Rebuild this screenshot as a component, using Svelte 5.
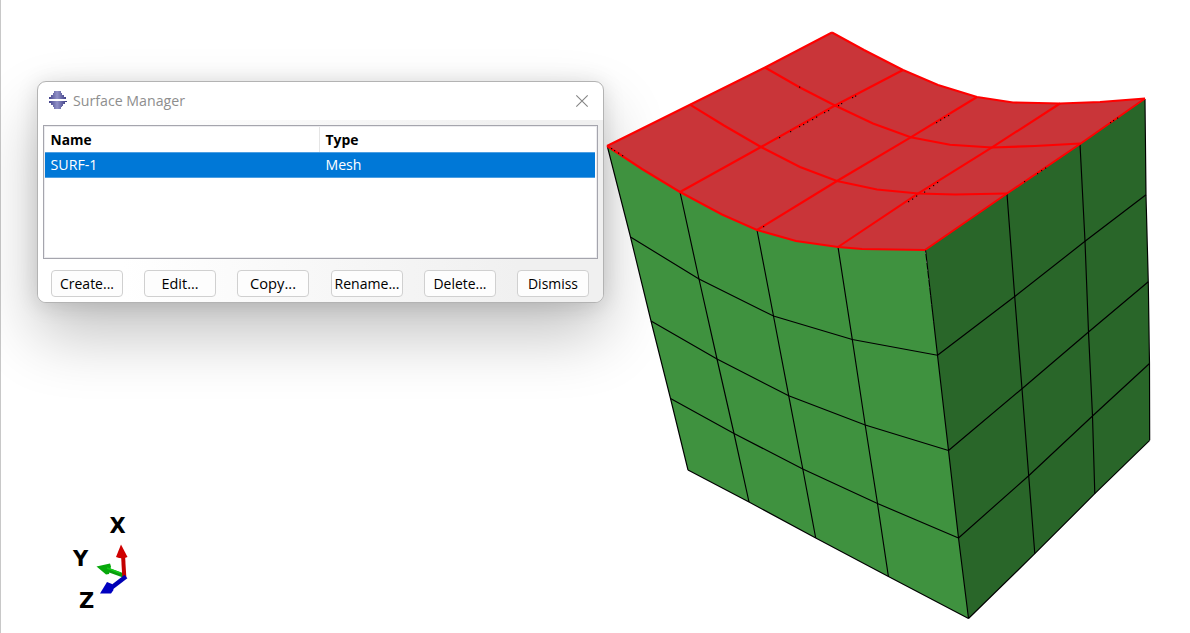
<script>
  const buttons = ['Create...', 'Edit...', 'Copy...', 'Rename...', 'Delete...', 'Dismiss'];
  const labelWidths = [54, 37, 46, 65, 53, 50];

  // Columns of nodes, top to bottom, for each visible side of the mesh
  const front = [
    [[607.5, 147], [630.5, 237], [651, 321], [670.5, 398.5], [688, 470]],
    [[680, 192], [699, 279], [717, 359], [734, 433.5], [749, 502]],
    [[757, 230], [773.5, 316], [788.7, 395.7], [802.8, 469], [815.7, 538]],
    [[838, 247], [852.3, 339.5], [865.2, 425], [877.5, 503.5], [888.4, 576.5]],
    [[925.5, 250], [937.5, 355.2], [948.5, 450.5], [958.5, 538], [968.5, 618.5]]
  ];
  const side = [
    front[4],
    [[1007, 194], [1014.7, 296.5], [1022, 388.7], [1028.7, 475.7], [1034.8, 553.7]],
    [[1080, 144.3], [1085, 241.3], [1088.5, 332], [1092.5, 416], [1094.8, 493.7]],
    [[1145, 99], [1146, 194.7], [1148.3, 281.8], [1149.5, 363.5], [1149.7, 440.3]]
  ];
  // Quadratic element edges on the surface, including midside nodes
  const surfaceRows = [
    [[832, 32.5], [864, 50], [903, 70], [938, 85], [977, 97], [1013, 102.5], [1060, 103.5], [1100, 102], [1145, 98.5]],
    [[765, 67.5], [799, 87], [835, 105.5], [873, 123.5], [910.7, 137.3], [950, 144.8], [992, 147.5], [1035, 146], [1080, 143.5]],
    [[690, 104.7], [724, 125.5], [761, 147], [800, 167], [837, 181], [877, 189.5], [918.3, 193.5], [955, 194.5], [1007, 193.5]],
    [[607, 146], [642, 169], [680, 192], [722, 214.5], [757, 230], [796, 241], [838, 247], [862, 249], [925, 250]]
  ];
  const surfaceCols = [
    [[607, 146], [690, 104.7], [765, 67.5], [832, 32.5]],
    [[680, 192], [761, 147], [835, 105.5], [903, 70]],
    [[757, 230], [837, 181], [910.7, 137.3], [977, 97]],
    [[838, 247], [918.3, 193.4], [992, 147.4], [1060, 103.5]],
    [[925, 250], [1007, 193.5], [1080, 144], [1145, 98.5]]
  ];
  const specks = [[799, 86.5], [779, 137], [790, 131], [799, 126], [803, 124], [807, 121.5], [812, 119], [816, 116.5], [824, 112], [828, 110], [838, 105], [841, 103], [852, 97], [855, 95.5], [611, 148], [614, 150], [618, 152.5], [622, 155], [763, 226], [936, 122], [940, 119.5], [944, 117], [948, 115], [908, 201], [912, 198.5], [916, 195.5], [924, 191.5], [929, 188], [933, 185], [937, 182], [1024, 181], [1037, 173], [1041, 170], [1045, 167.5], [1110, 122], [1113, 120], [1117, 117.5]];

  const pts = (a) => a.map((p) => p.join(',')).join(' ');
  const row = (cols, i) => cols.map((c) => c[i]);
  const face = (cols) => [...row(cols, 0), ...cols[cols.length - 1], ...row(cols, 4).reverse(), ...[...cols[0]].reverse()];
  const surface = [...surfaceRows[0], ...[...surfaceCols[4]].reverse(), ...[...surfaceRows[3]].reverse(), ...surfaceCols[0]];
</script>

<main class="viewport">
  <svg class="scene" viewBox="0 0 1190 633" width="1190" height="633">
    <g shape-rendering="crispEdges">
      <polygon points={pts([...surfaceRows[3], ...front[4].slice(1), ...row(front, 4).reverse(), ...[...front[0]].reverse()])} fill="#3f923f" />
      <polygon points={pts(face(side))} fill="#296629" />
      <polygon points={pts(surface)} fill="#c93539" />
    </g>
    <g fill="none" stroke="#000" stroke-width="1.15">
      {#each [...front, ...side.slice(1)] as c}<polyline points={pts(c)} />{/each}
      {#each [1, 2, 3, 4] as i}
        <polyline points={pts(row(front, i))} />
        <polyline points={pts(row(side, i))} />
      {/each}
    </g>
    <g fill="none" stroke="#f00" stroke-width="2.1">
      {#each [...surfaceRows, ...surfaceCols] as c}<polyline points={pts(c)} />{/each}
    </g>
    <g fill="#180000">
      {#each specks as [x, y]}<rect {x} {y} width="1.2" height="1.2" />{/each}
    </g>

    <g class="triad">
      <path d="M125 576L107 569.5" stroke="#0a9c0e" stroke-width="4" />
      <path d="M96.5 566.5L110 563.5L111 566.5L109 574L106 574.5Z" fill="#07a80b" />
      <path d="M107 568L120 573" stroke="#12c818" stroke-width="1.4" />
      <path d="M124.3 577L123 555" stroke="#c40000" stroke-width="4" />
      <path d="M121 544.5L127.5 557Q122 559.500 116 557Z" fill="#cf0000" />
      <path d="M126 576.500L111 588" stroke="#0000b4" stroke-width="4.500" />
      <path d="M100 593.500L107 582L112 584L113.500 590L111 593.500Z" fill="#0000c0" />
      <text x="109.500" y="533">X</text>
      <text x="73" y="566">Y</text>
      <text x="79" y="608">Z</text>
    </g>
  </svg>

  <section class="dialog">
    <header>
      <svg class="logo" width="18" height="18" viewBox="0 0 18 18" shape-rendering="crispEdges">
        <defs>
          <linearGradient id="metal"><stop offset="0" stop-color="#43438b" /><stop offset=".45" stop-color="#9191c7" /><stop offset="1" stop-color="#37377f" /></linearGradient>
        </defs>
        <path d="M5 0H12V2H13V4H15V6H17V8H0V6H2V4H4V2H5ZM0 10H18V11H16V13H14V15H13V16H12V18H5V16H4V14H2V12H0Z" fill="url(#metal)" />
      </svg>
      <svg class="title" width="124" height="24"><text x="0" y="17" textLength="112" lengthAdjust="spacingAndGlyphs">Surface Manager</text></svg>
      <svg class="close" width="12" height="12" viewBox="0 0 12 12"><path d="M.3.3L11.700 11.700M11.700.3L.3 11.700" stroke="#858585" stroke-width="1.1" /></svg>
    </header>
    <div class="body">
      <div class="table">
        <div class="row head">
          <svg class="cell" width="60" height="24"><text x="-.5" y="18" textLength="41" lengthAdjust="spacingAndGlyphs">Name</text></svg>
          <svg class="cell" width="60" height="24"><text x="-.5" y="18" textLength="33" lengthAdjust="spacingAndGlyphs">Type</text></svg>
        </div>
        <div class="row selected">
          <svg class="cell" width="60" height="24"><text x="-.5" y="17" textLength="47" lengthAdjust="spacingAndGlyphs">SURF-1</text></svg>
          <svg class="cell" width="60" height="24"><text x="-.5" y="17" textLength="36" lengthAdjust="spacingAndGlyphs">Mesh</text></svg>
        </div>
      </div>
      <div class="actions">
        {#each buttons as label, i}
          <button><svg width="70" height="25"><text x={35 - labelWidths[i] / 2} y="18" textLength={labelWidths[i]} lengthAdjust="spacingAndGlyphs">{label}</text></svg></button>
        {/each}
      </div>
    </div>
  </section>
</main>

<style>
  :global(body) { margin: 0; background: #fff; }
  .viewport {
    position: relative;
    box-sizing: border-box;
    width: 1190px;
    height: 633px;
    overflow: hidden;
    background: #fff;
    font-family: "Open Sans", "Noto Sans", sans-serif;
  }
  .viewport::before {
    content: "";
    position: absolute;
    inset: 0 auto 0 0;
    width: 1px;
    background: #c8c8c8;
  }
  .scene { position: absolute; inset: 0; z-index: 1; }
  .triad text { font: bold 21px "DejaVu Sans", sans-serif; }
  .dialog {
    position: absolute;
    left: 37px;
    top: 81px;
    box-sizing: border-box;
    width: 567px;
    height: 222px;
    border: 1px solid #b3b3b3;
    border-radius: 9px;
    display: flex;
    flex-direction: column;
    overflow: hidden;
    background: #fff;
    box-shadow: 0 32px 64px rgba(0, 0, 0, .24), 0 2px 21px rgba(0, 0, 0, .13);
  }
  header {
    height: 38px;
    flex: none;
    display: flex;
    align-items: center;
    padding: 0 15px 0 11px;
  }
  .logo { margin-top: -2px; }
  .title { margin-left: 6px; font-size: 15px; }
  .title text { fill: #8e8e8e; }
  .close { margin-left: auto; overflow: visible; }
  .cell, button svg { overflow: visible; }
  .body {
    flex: 1;
    display: flex;
    flex-direction: column;
    padding: 5px 5px 0;
    background: linear-gradient(90deg, #fff 0, #fff 15%, #f0f0f0 85%);
  }
  .table {
    box-sizing: border-box;
    height: 134px;
    border: 1px solid #a5a5ad;
    background: #fff;
    padding: 1px;
    box-shadow: inset 0 0 0 1px #ececef;
  }
  .row {
    box-sizing: border-box;
    display: grid;
    grid-template-columns: 275px 1fr;
    height: 25px;
    padding-left: 6px;
    font-size: 15px;
  }
  .head { font-weight: 700; background: linear-gradient(#e5e5e5, #e5e5e5) 274px 0 / 1px 100% no-repeat; }
  .selected {
    height: 26px;
    margin-right: 1px;
    border: solid #4d9fe2;
    border-width: 1px 0;
    background: #0078d7;
  }
  .selected text { fill: #fff; }
  .actions { display: flex; justify-content: space-between; padding: 11px 9px 0 8px; }
  button {
    box-sizing: border-box;
    width: 72px;
    height: 27px;
    padding: 0;
    display: grid;
    place-items: center;
    border: 1px solid #d0d0d0;
    border-radius: 4px;
    background: #fdfdfd;
    font: 15px "Open Sans", "Noto Sans", sans-serif;
    color: #000;
  }
</style>
